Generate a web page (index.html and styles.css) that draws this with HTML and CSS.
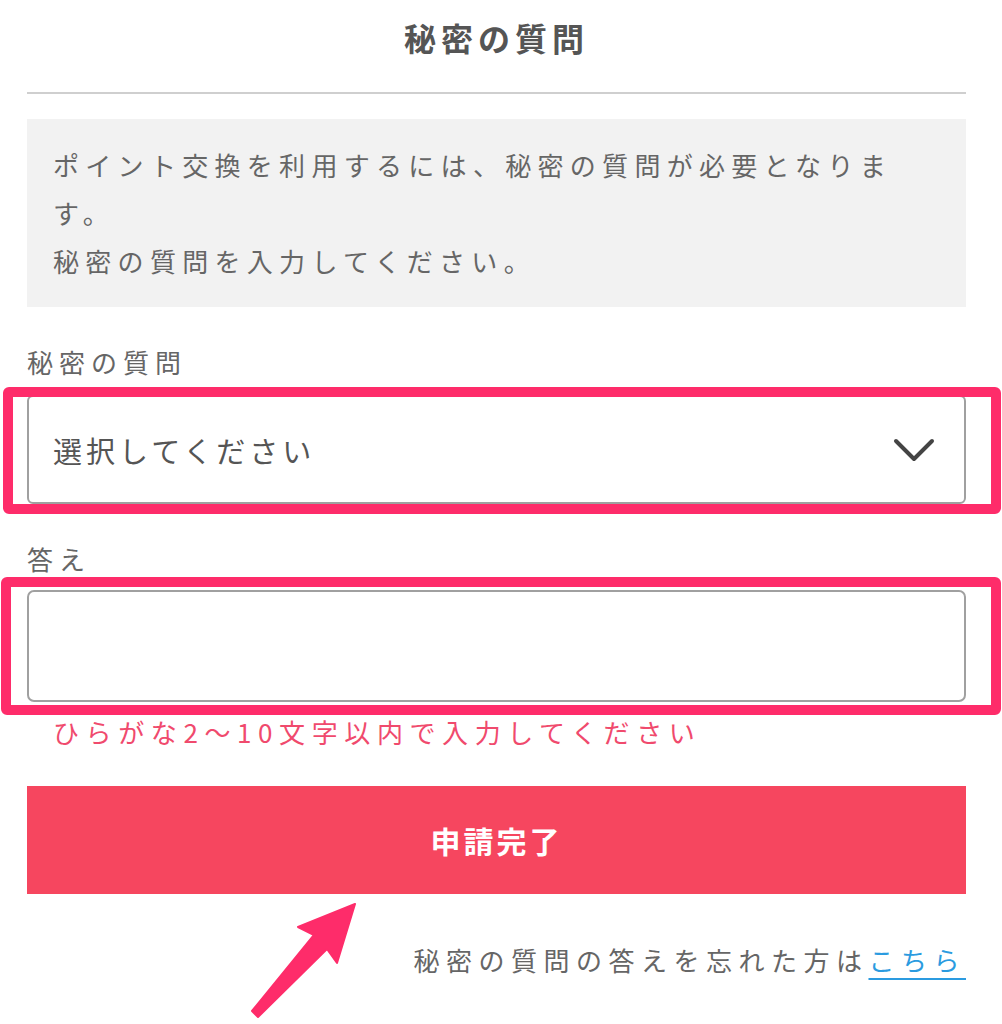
FILE: index.html
```html
<!DOCTYPE html>
<html lang="ja">
<head>
<meta charset="utf-8">
<title>秘密の質問</title>
<link rel="stylesheet" href="styles.css">
</head>
<body>
<div class="page">
  <header class="header">
    <h1 class="title">秘密の質問</h1>
  </header>
  <div class="notice">
    <p>ポイント交換を利用するには、秘密の質問が必要となります。<br>秘密の質問を入力してください。</p>
  </div>
  <div class="label label-first">秘密の質問</div>
  <div class="field field-select">
    <div class="select">
      <span class="select-text">選択してください</span>
      <svg class="chevron" width="42" height="24" viewBox="0 0 42 24"><polyline points="3,3 21,21 39,3" fill="none" stroke="#444" stroke-width="4" stroke-linecap="round" stroke-linejoin="round"/></svg>
    </div>
  </div>
  <div class="label">答え</div>
  <div class="field field-input">
    <div class="input"></div>
  </div>
  <div class="error">ひらがな2〜10文字以内で入力してください</div>
  <div class="button">申請完了</div>
  <div class="forgot">秘密の質問の答えを忘れた方は<a class="link" href="#">こちら</a></div>
</div>
<svg class="arrow" width="1002" height="1024" viewBox="0 0 1002 1024">
  <polygon points="355,904 298,927 314,935 252,1011 258,1017 327,949 337,963" fill="#fe2c6a" stroke="#fe2c6a" stroke-width="2" stroke-linejoin="round"/>
</svg>
</body>
</html>
```
FILE: styles.css
```css
html, body {
  margin: 0;
  padding: 0;
  background: #fff;
}
body {
  font-family: "Noto Sans CJK JP", "Noto Sans", sans-serif;
  color: #666;
  position: relative;
  width: 1002px;
  height: 1024px;
  overflow: hidden;
}
.page {
  width: 939px;
  margin-left: 27px;
  display: flex;
  flex-direction: column;
}
.header {
  border-bottom: 2px solid #cfcfcf;
  padding-top: 12px;
  height: 80px;
  box-sizing: content-box;
}
.title {
  margin: 0;
  font-size: 32px;
  line-height: 50px;
  font-weight: 700;
  letter-spacing: 5px;
  color: #555;
  text-align: center;
}
.notice {
  margin-top: 25px;
  background: #f2f2f2;
  padding: 22px 48px 22px 26px;
}
.notice p {
  margin: 0;
  font-size: 26px;
  line-height: 48px;
  letter-spacing: 6.3px;
  color: #666;
}
.label {
  margin-top: 35px;
  font-size: 26px;
  line-height: 40px;
  letter-spacing: 6px;
  color: #666;
}
.field {
  position: relative;
}
.field::after {
  content: "";
  position: absolute;
  border: 10px solid #fe2c6a;
  border-radius: 6px;
  pointer-events: none;
}
.field-select {
  margin-top: 13px;
}
.field-select::after {
  left: -24px;
  right: -35px;
  top: -8px;
  bottom: -10px;
}
.field-input {
  margin-top: 11px;
}
.field-input::after {
  left: -26px;
  right: -35px;
  top: -13px;
  bottom: -13px;
}
.select {
  height: 109px;
  box-sizing: border-box;
  border: 2px solid #a0a0a0;
  border-radius: 6px;
  background: #fff;
  display: flex;
  align-items: center;
  justify-content: space-between;
  padding: 0 29px 0 24px;
}
.select-text {
  font-size: 29px;
  letter-spacing: 4px;
  color: #555;
}
.chevron {
  display: block;
}
.input {
  height: 112px;
  box-sizing: border-box;
  border: 2px solid #a0a0a0;
  border-radius: 7px;
  background: #fff;
}
.error {
  margin-top: 10px;
  padding-left: 26px;
  font-size: 26px;
  line-height: 40px;
  letter-spacing: 6.6px;
  color: #f04a6d;
}
.button {
  margin-top: 34px;
  height: 108px;
  background: #f6465f;
  color: #fff;
  font-size: 30px;
  font-weight: 700;
  letter-spacing: 3px;
  display: flex;
  align-items: center;
  justify-content: center;
}
.forgot {
  margin-top: 46px;
  text-align: right;
  font-size: 26px;
  line-height: 40px;
  letter-spacing: 6.5px;
  color: #666;
}
.link {
  color: #2b9be0;
  text-decoration: underline;
  text-decoration-thickness: 2px;
  text-underline-offset: 7px;
}
.arrow {
  position: absolute;
  left: 0;
  top: 0;
  pointer-events: none;
}
```
